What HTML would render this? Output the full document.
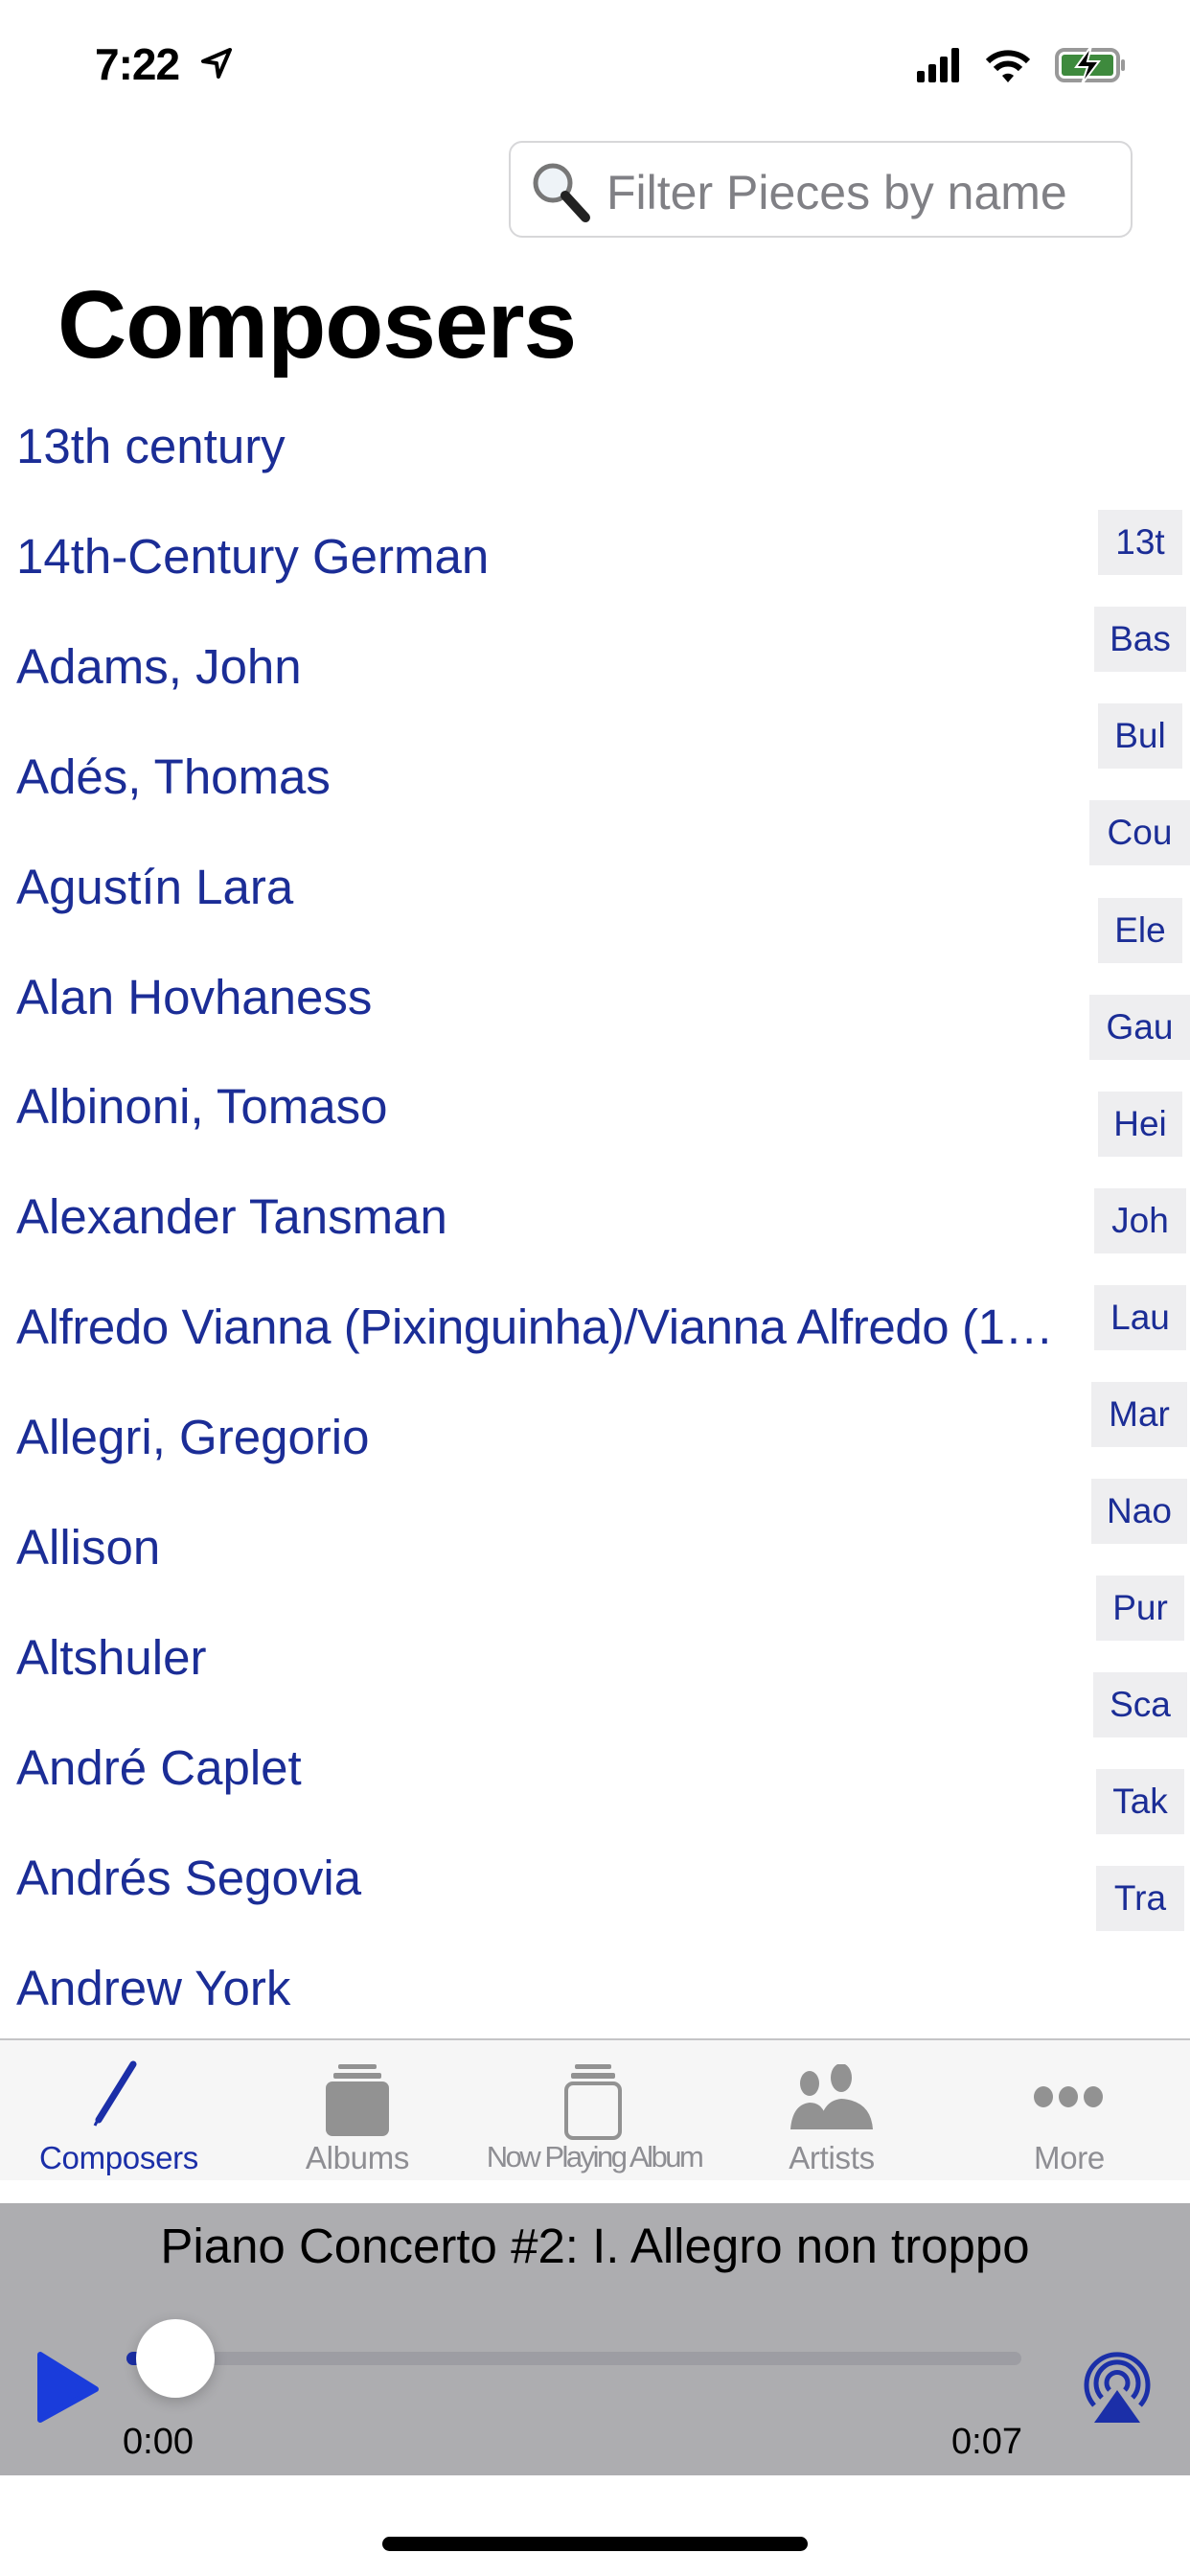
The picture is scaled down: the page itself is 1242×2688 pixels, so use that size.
<!DOCTYPE html>
<html><head><meta charset="utf-8"><style>
*{margin:0;padding:0;box-sizing:border-box}
body{width:1242px;height:2688px;background:#fff;position:relative;overflow:hidden;font-family:"Liberation Sans",sans-serif}
.abs{position:absolute}
.item{position:absolute;left:17px;font-size:51px;color:#1b2d96;white-space:nowrap;line-height:1}
.idx{position:absolute;background:#eeeef0;color:#1b2d96;font-size:37px;text-align:center;line-height:68px;height:68px}
.tab{position:absolute;top:2233px;font-size:33px;color:#8e8e93;text-align:center;width:240px;letter-spacing:-0.3px}
</style></head><body>
<div class="abs" style="left:99px;top:40px;font-size:46px;font-weight:bold;letter-spacing:-1px">7:22</div>
<svg class="abs" style="left:208px;top:48px" width="36" height="36" viewBox="0 0 36 36"><path d="M32 4 L4 16 L18 18 L20 32 Z" fill="none" stroke="#000" stroke-width="4" stroke-linejoin="round"/></svg>
<svg class="abs" style="left:955px;top:44px" width="230" height="46" viewBox="0 0 230 46">
<rect x="2" y="30" width="8" height="12" rx="2"/><rect x="14" y="23" width="8" height="19" rx="2"/><rect x="26" y="15" width="8" height="27" rx="2"/><rect x="38" y="6" width="8" height="36" rx="2"/>
<path d="M76 20 a30 30 0 0 1 42 0" fill="none" stroke="#000" stroke-width="6"/><path d="M84 28 a18 18 0 0 1 26 0" fill="none" stroke="#000" stroke-width="6"/><path d="M91 35 L97 42 L103 35 a9 9 0 0 0 -12 0z"/>
<rect x="148" y="8" width="64" height="32" rx="8" fill="none" stroke="#999" stroke-width="4"/><rect x="153" y="13" width="54" height="22" rx="3" fill="#3e8a3d"/><rect x="215" y="18" width="4" height="12" rx="2" fill="#999"/>
<path d="M184 4 L168 26 L180 26 L174 44 L192 20 L180 20 Z" fill="#000" stroke="#fff" stroke-width="2"/>
</svg>
<div class="abs" style="left:531px;top:147px;width:651px;height:101px;border:2px solid #d7d7d9;border-radius:14px"></div>
<svg class="abs" style="left:553px;top:167px" width="66" height="66" viewBox="0 0 66 66"><circle cx="24" cy="24" r="18" fill="#eef3f7" stroke="#777" stroke-width="5"/><path d="M37 37 L58 60" stroke="#222" stroke-width="10" stroke-linecap="round"/></svg>
<div class="abs" style="left:633px;top:172px;font-size:50px;color:#808085">Filter Pieces by name</div>
<div class="abs" style="left:60px;top:282px;font-size:100px;font-weight:bold;letter-spacing:-1px">Composers</div>

<div class="item" style="top:440px">13th century</div>
<div class="item" style="top:555px">14th-Century German</div>
<div class="item" style="top:670px">Adams, John</div>
<div class="item" style="top:785px">Adés, Thomas</div>
<div class="item" style="top:900px">Agustín Lara</div>
<div class="item" style="top:1015px">Alan Hovhaness</div>
<div class="item" style="top:1129px">Albinoni, Tomaso</div>
<div class="item" style="top:1244px">Alexander Tansman</div>
<div class="item" style="top:1359px;letter-spacing:-0.4px">Alfredo Vianna (Pixinguinha)/Vianna Alfredo (1…</div>
<div class="item" style="top:1474px">Allegri, Gregorio</div>
<div class="item" style="top:1589px">Allison</div>
<div class="item" style="top:1704px">Altshuler</div>
<div class="item" style="top:1819px">André Caplet</div>
<div class="item" style="top:1934px">Andrés Segovia</div>
<div class="item" style="top:2049px">Andrew York</div>

<div class="idx" style="left:1146px;top:532px;width:88px">13t</div>
<div class="idx" style="left:1142px;top:633px;width:96px">Bas</div>
<div class="idx" style="left:1146px;top:734px;width:88px">Bul</div>
<div class="idx" style="left:1137px;top:835px;width:105px">Cou</div>
<div class="idx" style="left:1146px;top:937px;width:88px">Ele</div>
<div class="idx" style="left:1137px;top:1038px;width:105px">Gau</div>
<div class="idx" style="left:1146px;top:1139px;width:88px">Hei</div>
<div class="idx" style="left:1142px;top:1240px;width:96px">Joh</div>
<div class="idx" style="left:1142px;top:1341px;width:96px">Lau</div>
<div class="idx" style="left:1139px;top:1442px;width:100px">Mar</div>
<div class="idx" style="left:1139px;top:1543px;width:100px">Nao</div>
<div class="idx" style="left:1144px;top:1644px;width:92px">Pur</div>
<div class="idx" style="left:1141px;top:1745px;width:98px">Sca</div>
<div class="idx" style="left:1144px;top:1846px;width:92px">Tak</div>
<div class="idx" style="left:1144px;top:1947px;width:92px">Tra</div>

<div class="abs" style="left:0;top:2127px;width:1242px;height:148px;background:#f6f6f6;border-top:2px solid #c4c4c6"></div>
<svg class="abs" style="left:95px;top:2150px" width="60" height="70" viewBox="0 0 60 70"><path d="M8 62 L44 4" stroke="#1b2fa8" stroke-width="7" stroke-linecap="round"/><path d="M6 64 L4 68" stroke="#1b2fa8" stroke-width="3"/></svg>
<svg class="abs" style="left:338px;top:2154px" width="70" height="76" viewBox="0 0 70 76"><rect x="15" y="0" width="40" height="5" rx="2" fill="#929292"/><rect x="10" y="9" width="50" height="6" rx="2" fill="#929292"/><rect x="2" y="18" width="66" height="57" rx="7" fill="#929292"/></svg>
<svg class="abs" style="left:588px;top:2154px" width="62" height="80" viewBox="0 0 62 80"><rect x="12" y="0" width="38" height="5" rx="2" fill="#929292"/><rect x="8" y="9" width="46" height="6" rx="2" fill="#929292"/><rect x="3" y="20" width="56" height="57" rx="7" fill="none" stroke="#929292" stroke-width="4"/></svg>
<svg class="abs" style="left:823px;top:2154px" width="90" height="70" viewBox="0 0 90 70"><ellipse cx="22" cy="20" rx="10" ry="13" fill="#929292"/><ellipse cx="55" cy="14" rx="11" ry="15" fill="#929292"/><path d="M2 68 Q4 42 22 40 Q34 40 38 52 L36 68Z" fill="#929292"/><path d="M32 68 Q34 38 55 36 Q86 38 88 68Z" fill="#929292"/></svg>
<svg class="abs" style="left:1078px;top:2173px" width="74" height="30" viewBox="0 0 74 30"><ellipse cx="11" cy="15" rx="10" ry="11" fill="#929292"/><ellipse cx="37" cy="15" rx="10" ry="11" fill="#929292"/><ellipse cx="63" cy="15" rx="10" ry="11" fill="#929292"/></svg>
<div class="tab" style="left:4px;color:#1b2fa8">Composers</div>
<div class="tab" style="left:253px">Albums</div>
<div class="tab" style="left:500px;letter-spacing:-2.5px;font-size:31px">Now Playing Album</div>
<div class="tab" style="left:748px">Artists</div>
<div class="tab" style="left:996px">More</div>

<div class="abs" style="left:0;top:2299px;width:1242px;height:284px;background:#adadb0"></div>
<div class="abs" style="left:0;top:2314px;width:1242px;text-align:center;font-size:51px;color:#000">Piano Concerto #2: I. Allegro non troppo</div>
<div class="abs" style="left:132px;top:2454px;width:934px;height:14px;border-radius:7px;background:#9d9da3"></div>
<div class="abs" style="left:132px;top:2454px;width:40px;height:14px;border-radius:7px;background:#1b2fa8"></div>
<div class="abs" style="left:142px;top:2420px;width:82px;height:82px;border-radius:50%;background:#fff;box-shadow:0 4px 14px rgba(0,0,0,.2)"></div>
<svg class="abs" style="left:38px;top:2453px" width="66" height="76" viewBox="0 0 66 76"><path d="M4 4 L62 40 L4 72 Z" fill="#1a3cdb" stroke="#1a3cdb" stroke-width="6" stroke-linejoin="round"/></svg>
<div class="abs" style="left:128px;top:2527px;font-size:38px">0:00</div>
<div class="abs" style="left:993px;top:2527px;font-size:38px">0:07</div>
<svg class="abs" style="left:1128px;top:2450px" width="76" height="80" viewBox="0 0 76 80"><path d="M14 60 A32 32 0 1 1 62 60" fill="none" stroke="#1b2fa8" stroke-width="5"/><path d="M22 52 A22 22 0 1 1 54 52" fill="none" stroke="#1b2fa8" stroke-width="5"/><path d="M30 44 A11 11 0 1 1 46 44" fill="none" stroke="#1b2fa8" stroke-width="5"/><path d="M38 44 L62 78 L14 78Z" fill="#1b2fa8"/></svg>
<div class="abs" style="left:399px;top:2647px;width:444px;height:15px;border-radius:8px;background:#000"></div>
</body></html>
